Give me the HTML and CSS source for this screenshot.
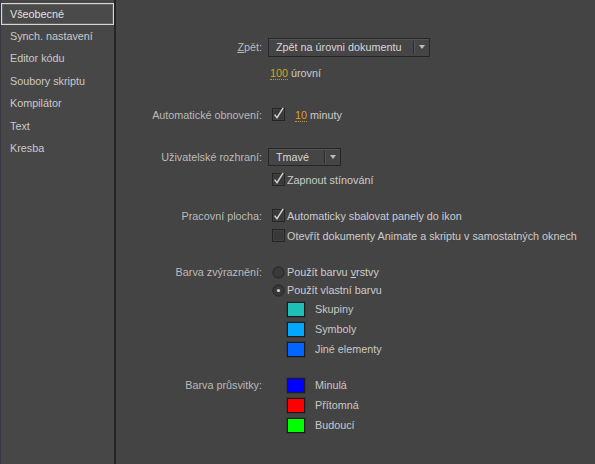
FILE: index.html
```html
<!DOCTYPE html>
<html lang="cs">
<head>
<meta charset="utf-8">
<title>Předvolby</title>
<link rel="stylesheet" href="styles.css">
</head>
<body>
<div class="app">
  <nav class="sidebar">
    <div class="nav-item active">Všeobecné</div>
    <div class="nav-item">Synch. nastavení</div>
    <div class="nav-item">Editor kódu</div>
    <div class="nav-item">Soubory skriptu</div>
    <div class="nav-item">Kompilátor</div>
    <div class="nav-item">Text</div>
    <div class="nav-item">Kresba</div>
  </nav>
  <main class="content">
    <section class="group">
      <div class="row">
        <span class="lbl"><u>Z</u>pět:</span>
        <div class="ctl">
          <div class="select select-wide">
            <span class="select-text">Zpět na úrovni dokumentu</span>
            <span class="select-btn"><span class="tri"></span></span>
          </div>
        </div>
      </div>
      <div class="row row-gap6">
        <span class="lbl"></span>
        <div class="ctl ctl-num"><span class="num">100</span>&nbsp;úrovní</div>
      </div>
    </section>

    <section class="group gap22">
      <div class="row">
        <span class="lbl">Automatické obnovení:</span>
        <div class="ctl ctl-check">
          <svg class="cb" width="13" height="14" viewBox="0 0 13 14"><rect x="0.5" y="1.5" width="12" height="12" fill="#393939" stroke="#242424"/><rect x="1.5" y="2.5" width="10" height="10" fill="none" stroke="#414141"/><path d="M2.6 7.6 L5 10.6 L11.2 0.8" fill="none" stroke="#d2d2d2" stroke-width="1.5"/></svg>
          <span class="num num-gap">10</span>&nbsp;minuty
        </div>
      </div>
    </section>

    <section class="group gap22">
      <div class="row">
        <span class="lbl">Uživatelské rozhraní:</span>
        <div class="ctl">
          <div class="select select-narrow">
            <span class="select-text">Tmavé</span>
            <span class="select-btn"><span class="tri"></span></span>
          </div>
        </div>
      </div>
      <div class="row row-gap3">
        <span class="lbl"></span>
        <div class="ctl ctl-check">
          <svg class="cb" width="13" height="14" viewBox="0 0 13 14"><rect x="0.5" y="1.5" width="12" height="12" fill="#393939" stroke="#242424"/><rect x="1.5" y="2.5" width="10" height="10" fill="none" stroke="#414141"/><path d="M2.6 7.6 L5 10.6 L11.2 0.8" fill="none" stroke="#d2d2d2" stroke-width="1.5"/></svg>
          <span class="opt">Zapnout stínování</span>
        </div>
      </div>
    </section>

    <section class="group gap16">
      <div class="row">
        <span class="lbl">Pracovní plocha:</span>
        <div class="ctl ctl-check">
          <svg class="cb" width="13" height="14" viewBox="0 0 13 14"><rect x="0.5" y="1.5" width="12" height="12" fill="#393939" stroke="#242424"/><rect x="1.5" y="2.5" width="10" height="10" fill="none" stroke="#414141"/><path d="M2.6 7.6 L5 10.6 L11.2 0.8" fill="none" stroke="#d2d2d2" stroke-width="1.5"/></svg>
          <span class="opt">Automaticky sbalovat panely do ikon</span>
        </div>
      </div>
      <div class="row">
        <span class="lbl"></span>
        <div class="ctl ctl-check">
          <svg class="cb" width="13" height="14" viewBox="0 0 13 14"><rect x="0.5" y="1.5" width="12" height="12" fill="#393939" stroke="#242424"/><rect x="1.5" y="2.5" width="10" height="10" fill="none" stroke="#414141"/></svg>
          <span class="opt">Otevřít dokumenty Animate a skriptu v samostatných oknech</span>
        </div>
      </div>
    </section>

    <section class="group gap17">
      <div class="row row-h18">
        <span class="lbl">Barva zvýraznění:</span>
        <div class="ctl ctl-check">
          <svg class="rb" width="13" height="13" viewBox="0 0 13 13"><circle cx="6.5" cy="6.5" r="5.6" fill="#393939" stroke="#252525"/></svg>
          <span class="opt">Použít barvu <u>v</u>rstvy</span>
        </div>
      </div>
      <div class="row row-h18">
        <span class="lbl"></span>
        <div class="ctl ctl-check">
          <svg class="rb" width="13" height="13" viewBox="0 0 13 13"><circle cx="6.5" cy="6.5" r="5.6" fill="#393939" stroke="#252525"/><circle cx="6.5" cy="6.5" r="1.6" fill="#d6d6d6"/></svg>
          <span class="opt">Použít vlastní barvu</span>
        </div>
      </div>
      <div class="row">
        <span class="lbl"></span>
        <div class="ctl ctl-swatch"><span class="swatch sw-teal"></span><span class="sw-label">Skupiny</span></div>
      </div>
      <div class="row">
        <span class="lbl"></span>
        <div class="ctl ctl-swatch"><span class="swatch sw-sky"></span><span class="sw-label">Symboly</span></div>
      </div>
      <div class="row">
        <span class="lbl"></span>
        <div class="ctl ctl-swatch"><span class="swatch sw-azure"></span><span class="sw-label">Jiné elementy</span></div>
      </div>
    </section>

    <section class="group gap16">
      <div class="row">
        <span class="lbl">Barva průsvitky:</span>
        <div class="ctl ctl-swatch"><span class="swatch sw-blue"></span><span class="sw-label">Minulá</span></div>
      </div>
      <div class="row">
        <span class="lbl"></span>
        <div class="ctl ctl-swatch"><span class="swatch sw-red"></span><span class="sw-label">Přítomná</span></div>
      </div>
      <div class="row">
        <span class="lbl"></span>
        <div class="ctl ctl-swatch"><span class="swatch sw-green"></span><span class="sw-label">Budoucí</span></div>
      </div>
    </section>
  </main>
</div>
</body>
</html>
```

FILE: styles.css
```css
html, body {
  margin: 0;
  padding: 0;
}

body {
  background: #444444;
  font-family: "Liberation Sans", Arial, sans-serif;
  font-size: 10.8px;
  color: #bcbcbc;
}

.app {
  display: flex;
  width: 595px;
  height: 464px;
  overflow: hidden;
}

/* Sidebar */
.sidebar {
  width: 116px;
  flex: 0 0 116px;
  box-sizing: border-box;
  background: #474747;
  border-left: 1px solid #363940;
  border-right: 2px solid #252525;
  padding-top: 3px;
}

.nav-item {
  height: 22.4px;
  line-height: 22.4px;
  padding-left: 9px;
  color: #c9c9c9;
  white-space: nowrap;
}

.nav-item.active {
  height: 22px;
  line-height: 20px;
  box-sizing: border-box;
  padding-left: 8px;
  border: 1px solid #d6d6d6;
  box-shadow: inset 0 0 0 1px #636363;
  background: #4a4a4a;
  color: #e0e0e0;
}

/* Content */
.content {
  flex: 1;
  padding-top: 37px;
}

.group.gap22 { margin-top: 22px; }
.group.gap17 { margin-top: 17px; }
.group.gap16 { margin-top: 16px; }

.row {
  display: grid;
  grid-template-columns: 146px 1fr;
  column-gap: 7px;
  height: 20px;
  align-items: center;
}

.row.row-gap6 { margin-top: 6px; }
.row.row-gap3 { margin-top: 3px; }
.row.row-h18 { height: 18px; }

.lbl {
  text-align: right;
  white-space: nowrap;
  color: #bababa;
}

.ctl {
  display: flex;
  align-items: center;
  white-space: nowrap;
  color: #cccccc;
}

.ctl-num {
  padding-left: 1px;
}

.ctl-check {
  padding-left: 3px;
}

.cb, .rb {
  flex: 0 0 auto;
  display: block;
}

.cb { margin-top: -2px; }

.opt {
  margin-left: 2px;
}

.num {
  color: #d8a02a;
  border-bottom: 1px dotted #c8922a;
  line-height: 12px;
}

.num-gap {
  margin-left: 10px;
}

/* Dropdowns */
.select {
  display: flex;
  align-items: stretch;
  height: 19px;
  box-sizing: border-box;
  border: 1px solid #262626;
  background: #454545;
  box-shadow: inset 0 1px 0 #535353;
  margin-left: -1px;
}

.select-wide { width: 162px; }
.select-narrow { width: 73px; height: 18px; }

.select-text {
  flex: 1;
  display: flex;
  align-items: center;
  padding-left: 7px;
  color: #d8d8d8;
}

.select-btn {
  width: 15px;
  display: flex;
  align-items: center;
  justify-content: center;
  border-left: 1px solid #2c2c2c;
  box-shadow: inset 1px 0 0 #565656;
  margin: 2px 0;
}

.tri {
  width: 0;
  height: 0;
  border-left: 3.5px solid transparent;
  border-right: 3.5px solid transparent;
  border-top: 4px solid #bdbdbd;
}

/* Swatches */
.ctl-swatch {
  padding-left: 18px;
}

.swatch {
  width: 18px;
  height: 15px;
  box-sizing: border-box;
  border: 1px solid #1c1c1c;
  box-shadow: 0 0 0 1px #3a3a3a;
}

.sw-label {
  margin-left: 10px;
  color: #c8c8c8;
}

.sw-teal { background: #1dbfb6; }
.sw-sky { background: #00a9ff; }
.sw-azure { background: #0066ff; }
.sw-blue { background: #0000ff; }
.sw-red { background: #ff0000; }
.sw-green { background: #00ff00; }
```
